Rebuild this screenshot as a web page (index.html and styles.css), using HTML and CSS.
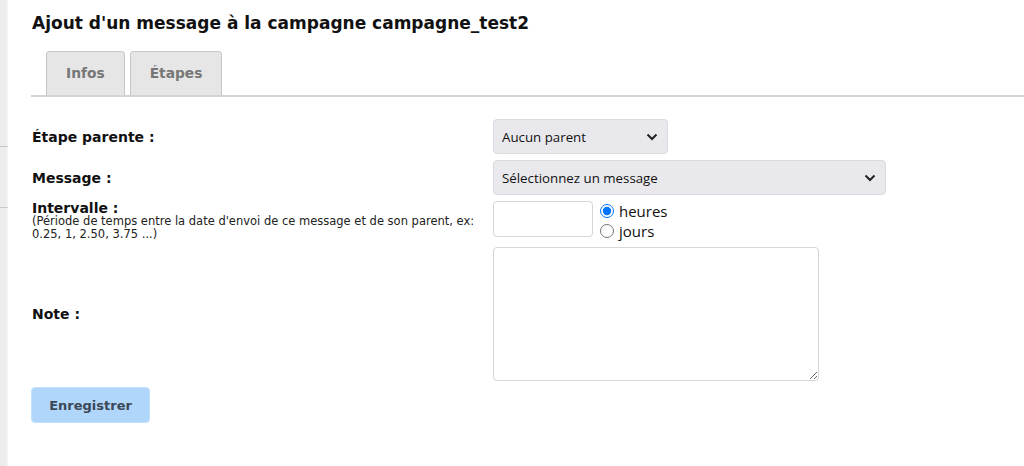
FILE: index.html
```html
<!DOCTYPE html>
<html>
<head>
<meta charset="utf-8">
<link rel="stylesheet" href="styles.css">
</head>
<body>
<div class="page">
  <div class="side-strip">
    <div class="side-item"></div>
    <div class="side-item"></div>
  </div>
  <div class="main">
    <h1 class="page-title">Ajout d'un message à la campagne campagne_test2</h1>

    <div class="tabs">
      <div class="tab">Infos</div>
      <div class="tab">Étapes</div>
    </div>

    <form class="step-form">
      <label class="form-label" for="parent">Étape parente :</label>
      <div class="form-field">
        <select id="parent" class="form-select select-small">
          <option>Aucun parent</option>
        </select>
      </div>

      <label class="form-label" for="message">Message :</label>
      <div class="form-field">
        <select id="message" class="form-select select-wide">
          <option>Sélectionnez un message</option>
        </select>
      </div>

      <div class="form-label label-top">
        <label for="interval">Intervalle :</label>
        <div class="label-help">(Période de temps entre la date d'envoi de ce message et de son parent, ex: 0.25, 1, 2.50, 3.75 ...)</div>
      </div>
      <div class="form-field interval-field">
        <input id="interval" class="form-input" type="text">
        <div class="radio-group">
          <label class="radio-line"><input type="radio" name="unit" checked> heures</label>
          <label class="radio-line"><input type="radio" name="unit"> jours</label>
        </div>
      </div>

      <label class="form-label" for="note">Note :</label>
      <div class="form-field">
        <textarea id="note" class="form-textarea"></textarea>
      </div>
    </form>

    <button class="btn-save" type="button">Enregistrer</button>
  </div>
</div>
</body>
</html>
```

FILE: styles.css
```css
html, body {
  margin: 0;
  padding: 0;
  background-color: white;
}

body {
  font-family: "DejaVu Sans", Verdana, sans-serif;
  color: #111;
}

.page {
  display: flex;
  min-height: 466px;
}

.side-strip {
  width: 8px;
  background: linear-gradient(to right, #ececec 0, #ececec 6px, #f7f7f7 8px);
  padding-top: 86px;
  box-sizing: border-box;
}

.side-item {
  height: 60px;
  border-bottom: 1px solid #c9c9c9;
}

.main {
  flex: 1;
  padding: 12px 0 0 23px;
}

.page-title {
  margin: 0;
  font-size: 17px;
  line-height: 22px;
  font-weight: bold;
  color: #111;
  padding-left: 1px;
}

.tabs {
  display: flex;
  gap: 5px;
  margin-top: 17px;
  padding-left: 15px;
  border-bottom: 2px solid #d4d4d4;
}

.tab {
  background-color: #e6e6e6;
  border: 1px solid #c6c6c6;
  border-bottom: none;
  border-radius: 4px 4px 0 0;
  padding: 13px 19px 14px 19px;
  font-size: 13.8px;
  line-height: 16px;
  font-weight: bold;
  color: #777;
}

.step-form {
  display: grid;
  grid-template-columns: 462px auto;
  row-gap: 6px;
  margin-top: 22px;
}

.form-label {
  font-size: 14px;
  font-weight: bold;
  color: #111;
  padding-left: 1px;
  align-self: center;
}

.form-label.label-top {
  align-self: start;
  line-height: 14px;
}

.label-help {
  font-size: 11.5px;
  font-weight: normal;
  line-height: 13px;
  color: #222;
  padding-right: 8px;
}

.form-field {
  display: flex;
  align-items: flex-start;
}

.form-select {
  appearance: none;
  font-family: "Open Sans", "Noto Sans", sans-serif;
  font-size: 13.3px;
  color: #111;
  background-color: #e9e9ed;
  background-image: url("data:image/svg+xml;utf8,<svg xmlns='http://www.w3.org/2000/svg' width='12' height='8' viewBox='0 0 12 8'><path d='M1.5 1.5 L6 6 L10.5 1.5' fill='none' stroke='%23222' stroke-width='2'/></svg>");
  background-repeat: no-repeat;
  background-position: right 9px center;
  border: 1px solid #dadade;
  border-radius: 4px;
  padding: 0 30px 0 8px;
  height: 35px;
  margin: 0;
}

.select-small {
  width: 175px;
}

.select-wide {
  width: 393px;
}

.form-input {
  box-sizing: border-box;
  width: 100px;
  height: 36px;
  border: 1px solid #d6d6d6;
  border-radius: 4px;
  margin: 0;
}

.radio-group {
  display: flex;
  flex-direction: column;
  margin-left: 6px;
}

.radio-line {
  display: flex;
  align-items: center;
  font-family: "Open Sans", "Noto Sans", sans-serif;
  font-size: 15px;
  line-height: 20px;
  color: #111;
}

.radio-line input {
  width: 14px;
  height: 14px;
  margin: 0 5px 0 1px;
}

.form-textarea {
  box-sizing: border-box;
  width: 326px;
  height: 134px;
  border: 1px solid #d6d6d6;
  border-radius: 4px;
  margin: 0;
}

.btn-save {
  margin-top: 6px;
  width: 119px;
  height: 36px;
  background-color: #b1d6fb;
  border: 1px solid #c2e0fc;
  border-radius: 4px;
  font-family: "DejaVu Sans", Verdana, sans-serif;
  font-size: 13px;
  font-weight: bold;
  color: #3a4857;
}
```
